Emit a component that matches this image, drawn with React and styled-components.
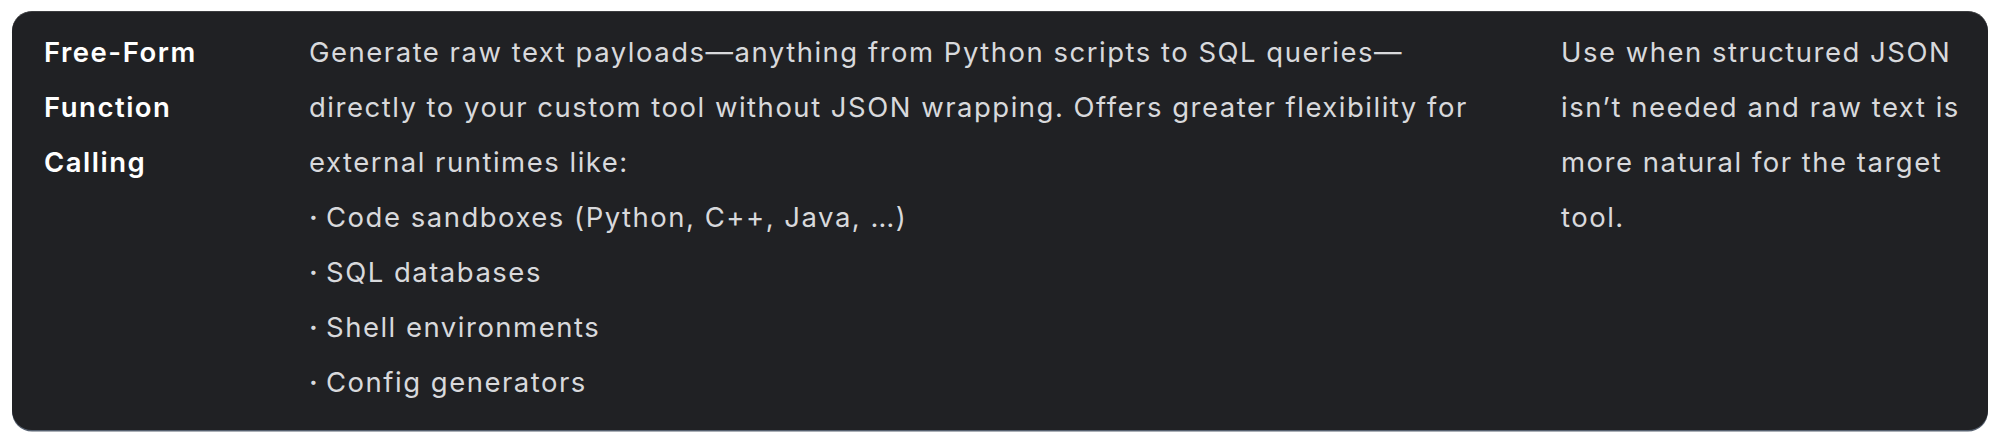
import React from "react";
import styled, { createGlobalStyle } from "styled-components";

const GlobalStyle = createGlobalStyle`
  html, body {
    margin: 0;
    padding: 0;
    background: #ffffff;
  }
  body {
    font-family: Inter, "Noto Sans", sans-serif;
    -webkit-font-smoothing: antialiased;
  }
`;

const Page = styled.div`
  padding: 11px 12px;
`;

const Card = styled.div`
  display: grid;
  grid-template-columns: 265px 1252px 1fr;
  padding: 13px 16px 20px;
  background-color: #202124;
  border-radius: 20px;
  border-top: 1px solid #3c3d40;
  box-shadow: 0 1.5px 0 #56606f;
  color: #d8d9dc;
  font-size: 27.5px;
  line-height: 55px;
  letter-spacing: 1.5px;
`;

const Cell = styled.div`
  padding: 0 16px;
  white-space: nowrap;
  font-weight: ${(p) => (p.$head ? 600 : 400)};
  color: ${(p) => (p.$head ? "#ffffff" : "#d8d9dc")};
`;

const Line = styled.div``;

const Bullet = styled.span`
  display: inline-block;
  width: 17px;
  letter-spacing: 0;
  font-weight: 600;
`;

const rows = [
  {
    name: ["Free-Form", "Function", "Calling"],
    body: [
      "Generate raw text payloads\u2014anything from Python scripts to SQL queries\u2014",
      "directly to your custom tool without JSON wrapping. Offers greater flexibility for",
      "external runtimes like:",
    ],
    items: [
      "Code sandboxes (Python, C++, Java, \u2026)",
      "SQL databases",
      "Shell environments",
      "Config generators",
    ],
    use: [
      "Use when structured JSON",
      "isn\u2019t needed and raw text is",
      "more natural for the target",
      "tool.",
    ],
  },
];

const App = () => {
  return (
    <Page>
      <GlobalStyle />
      {rows.map((r, i) => (
        <Card key={i}>
          <Cell $head>
            {r.name.map((t) => (
              <Line key={t}>{t}</Line>
            ))}
          </Cell>
          <Cell>
            {r.body.map((t) => (
              <Line key={t}>{t}</Line>
            ))}
            {r.items.map((t) => (
              <Line key={t}>
                <Bullet>·</Bullet>
                {t}
              </Line>
            ))}
          </Cell>
          <Cell>
            {r.use.map((t) => (
              <Line key={t}>{t}</Line>
            ))}
          </Cell>
        </Card>
      ))}
    </Page>
  );
};

export default App;
